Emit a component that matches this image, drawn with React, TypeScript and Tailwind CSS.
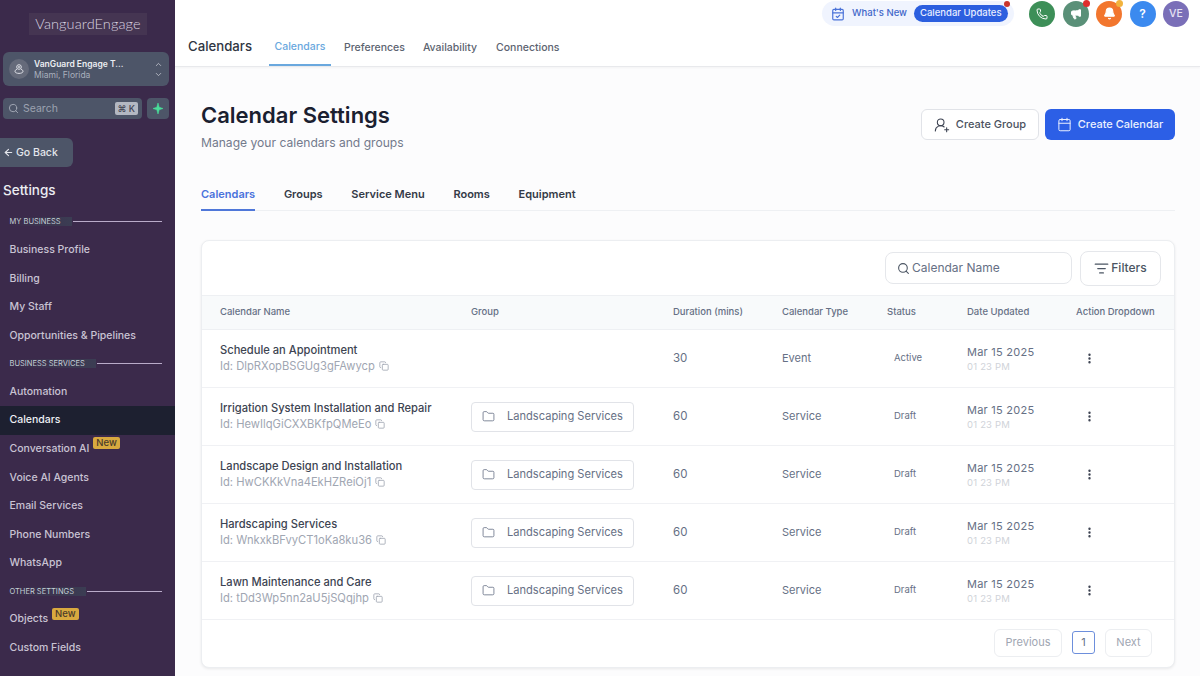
import { ArrowLeft, Calendar, CalendarCheck, ChevronDown, ChevronUp, Copy, Folder, ListFilter, Megaphone, MoreVertical, Phone, Bell, Search, UserRoundPlus } from "lucide-react";

const font = { fontFamily: "Inter, 'Noto Sans', sans-serif" };

function Section({ label, tintW }: { label: string; tintW: string }) {
  return (
    <div className="flex h-[27.5px] items-center pl-[9.5px] pr-[13px]">
      <span className={`${tintW} flex h-[9px] shrink-0 items-center whitespace-nowrap bg-linear-to-r from-[#3b2a4b] to-[#3b3d53] text-[7.5px] uppercase leading-none text-[#c4d0d6]`}>{label}</span>
      <span className="h-px flex-1 bg-[#b9abc9]" />
    </div>
  );
}

function NavItem({ label, active, isNew, mt }: { label: string; active?: boolean; isNew?: boolean; mt?: string }) {
  return (
    <div className={`relative flex h-[28.6px] shrink-0 items-center pl-[9.5px] text-[10.5px] font-medium ${active ? "bg-[#1d2030] text-[#eef0f5]" : "text-[#c9c3d3]"}`}>
      <span className="whitespace-nowrap">{label}</span>
      {isNew && <span className={`ml-1 ${mt} rounded-[2px] bg-[#d8a93f] px-[3px] text-[9.5px] leading-[12px] text-[#4a3a2a]`}>New</span>}
    </div>
  );
}

function Sidebar() {
  return (
    <aside className="flex w-[175px] shrink-0 flex-col overflow-hidden bg-[#3b2a4b]">
      <div className="mt-[13px] flex h-[22px] items-center self-end mr-[28px] w-[118px] justify-center bg-[#453552] text-[14.5px] font-light tracking-[0.1px] text-[#d9d3e0]" style={{ fontFamily: "Lato, sans-serif" }}>VanguardEngage</div>
      <div className="ml-[3px] mt-[17px] flex h-[34px] w-[166px] items-center rounded-md bg-[#4d5568] pl-[6px] pr-[6px]">
        <span className="flex h-5 w-5 shrink-0 items-center justify-center rounded-full bg-[#656a7a]">
          <svg width="12" height="12" viewBox="0 0 12 12" fill="none" stroke="#dfe1e8" strokeWidth="1"><circle cx="6" cy="4" r="2.3" /><circle cx="6" cy="4" r="0.6" /><path d="M4 6.2 C2.5 6.8 2 7.6 2 8.4 C2 9.6 3.8 10.4 6 10.4 C8.2 10.4 10 9.6 10 8.4 C10 7.6 9.5 6.8 8 6.2" /></svg>
        </span>
        <div className="ml-[5px] flex-1 leading-none">
          <div className="text-[8.5px] font-semibold leading-[12px] text-[#eceef2] whitespace-nowrap">VanGuard Engage T...</div>
          <div className="text-[8.5px] leading-[11px] text-[#aab0bd]">Miami, Florida</div>
        </div>
        <div className="flex flex-col gap-[1px] text-[#c9ccd5]"><ChevronUp size={9} /><ChevronDown size={9} /></div>
      </div>
      <div className="ml-[3px] mt-[12px] flex h-[21px] items-center gap-[5px]">
        <div className="flex h-[21px] w-[139px] items-center rounded-[4px] bg-[#4d5568] pl-[5px] pr-[4px]">
          <Search size={11} className="text-[#a5abb8]" />
          <span className="ml-[4px] flex-1 text-[10.5px] text-[#9ca2b0]">Search</span>
          <span className="rounded-[2px] bg-[#b3b8c2] px-[3px] text-[9px] font-medium leading-[13px] text-[#3f4352]">⌘ K</span>
        </div>
        <div className="flex h-[21px] w-[22px] items-center justify-center rounded-[4px] bg-[#4d5568]">
          <svg width="10" height="11" viewBox="0 0 10 11"><path d="M5 0 L6.2 4.3 L10 5.5 L6.2 6.7 L5 11 L3.8 6.7 L0 5.5 L3.8 4.3 Z" fill="#4ade9a" stroke="#4ade9a" strokeWidth="0.6" /></svg>
        </div>
      </div>
      <div className="mt-[19px] flex h-[29px] w-[73px] items-center rounded-r-md bg-[#4d5568] pl-[3px] text-[10.5px] font-medium text-[#e4e6ec]">
        <ArrowLeft size={11} strokeWidth={2.4} /><span className="ml-[2px]">Go Back</span>
      </div>
      <div className="mt-[14px] h-[19px] pl-[3px] text-[13.5px] font-medium leading-[19px] text-[#eceef2]">Settings</div>
      <div className="mt-[8px] flex flex-col">
        <Section label="My Business" tintW="w-[62px] mr-[1px]" />
        <NavItem label="Business Profile" />
        <NavItem label="Billing" />
        <NavItem label="My Staff" />
        <NavItem label="Opportunities & Pipelines" />
        <Section label="Business Services" tintW="w-[86px] mr-[1px]" />
        <NavItem label="Automation" />
        <NavItem label="Calendars" active />
        <NavItem label="Conversation AI" isNew mt="-mt-[11px]" />
        <NavItem label="Voice AI Agents" />
        <NavItem label="Email Services" />
        <NavItem label="Phone Numbers" />
        <NavItem label="WhatsApp" />
        <Section label="Other Settings" tintW="w-[76px] mr-[1px]" />
        <NavItem label="Objects" isNew mt="-mt-[11px]" />
        <NavItem label="Custom Fields" />
      </div>
    </aside>
  );
}

function Round({ bg, children, dot }: { bg: string; children: React.ReactNode; dot?: string }) {
  return (
    <div className={`relative flex h-[26px] w-[26px] items-center justify-center rounded-full text-white ${bg}`}>
      {children}
      {dot && <span className={`absolute -right-[1px] -top-[1px] h-[7px] w-[7px] rounded-full ${dot}`} />}
    </div>
  );
}

function TopBar() {
  return (
    <header className="relative h-[67px] shrink-0 border-b border-[#e8e9ec] bg-white shadow-[0_1px_2px_rgba(0,0,0,0.04)]">
      <div className="absolute right-[11px] top-0 flex h-[27px] items-center">
        <div className="relative mr-[15px] flex h-[25px] w-[192px] items-center whitespace-nowrap rounded-full bg-[#f0f4fe] pl-[9px]">
          <CalendarCheck size={14} className="text-[#4a72d8]" />
          <span className="ml-[7px] text-[9.5px] font-medium text-[#3f66c9]">What's New</span>
          <span className="relative ml-[7px] flex h-[17px] items-center rounded-full bg-[#2c5fdf] px-[6px] text-[9.5px] font-medium text-[#e8eeff]">
            Calendar Updates
            <span className="absolute -right-[2px] -top-[4px] h-[6px] w-[6px] rounded-full bg-[#c8352c]" />
          </span>
        </div>
        <div className="flex gap-[7.5px]">
          <Round bg="bg-[#3d8f58]"><Phone size={12} /></Round>
          <Round bg="bg-[#5a9078]" dot="bg-[#e02d2d]"><Megaphone size={12} fill="white" /></Round>
          <Round bg="bg-[#f2762e]" dot="bg-[#f2b33d]"><Bell size={13} fill="white" /></Round>
          <Round bg="bg-[#3b8aef]"><span className="text-[12px] font-semibold">?</span></Round>
          <Round bg="bg-[#7a6fb8]"><span className="text-[10.5px] font-medium text-[#e6e3f3]">VE</span></Round>
        </div>
      </div>
      <div className="flex h-full items-end pl-[13px]">
        <div className="mb-[10px] text-[13.2px] font-medium leading-[20px] text-[#2f3542]">Calendars</div>
        <nav className="ml-[17px] flex text-[10.5px] font-medium text-[#5c6370]">
          <div className="flex h-[30px] w-[62px] items-start justify-center border-b-2 border-[#6aa8de] pt-[3px] text-[#6aa8de]">Calendars</div>
          <div className="ml-[13px] pt-[4px]">Preferences</div>
          <div className="ml-[18px] pt-[4px]">Availability</div>
          <div className="ml-[19px] pt-[4px]">Connections</div>
        </nav>
      </div>
    </header>
  );
}

const rows = [
  { name: "Schedule an Appointment", id: "DlpRXopBSGUg3gFAwycp", group: false, dur: "30", type: "Event", status: "Active" },
  { name: "Irrigation System Installation and Repair", id: "HewIlqGiCXXBKfpQMeEo", group: true, dur: "60", type: "Service", status: "Draft" },
  { name: "Landscape Design and Installation", id: "HwCKKkVna4EkHZReiOj1", group: true, dur: "60", type: "Service", status: "Draft" },
  { name: "Hardscaping Services", id: "WnkxkBFvyCT1oKa8ku36", group: true, dur: "60", type: "Service", status: "Draft" },
  { name: "Lawn Maintenance and Care", id: "tDd3Wp5nn2aU5jSQqjhp", group: true, dur: "60", type: "Service", status: "Draft" },
];

const cols = "grid grid-cols-[269px_202px_109px_105px_80px_109px_1fr] items-center";

function Table() {
  return (
    <div className="mt-[29px] flex h-[428px] flex-col rounded-lg border border-[#eceef1] bg-white shadow-[0_1px_3px_rgba(0,0,0,0.08)]">
      <div className="flex h-[54px] shrink-0 items-center justify-end gap-[8px] pr-[13px]">
        <div className="flex h-[32px] w-[187px] items-center rounded-lg border border-[#e5e7eb] pl-[11px] text-[12px] text-[#667085]">
          <Search size={13} className="mr-[2px] text-[#4b5563]" />Calendar Name
        </div>
        <div className="flex h-[35px] w-[81px] items-center justify-center rounded-lg border border-[#e5e7eb] text-[12px] font-medium text-[#4b5563]">
          <ListFilter size={15} className="mr-[2px]" />Filters
        </div>
      </div>
      <div className={`${cols} h-[35px] shrink-0 border-y border-[#eef0f3] bg-[#f8fafb] text-[9.5px] font-medium text-[#667085]`}>
        <div className="pl-[18px]">Calendar Name</div><div>Group</div><div>Duration (mins)</div><div>Calendar Type</div><div>Status</div><div>Date Updated</div><div className="whitespace-nowrap">Action Dropdown</div>
      </div>
      {rows.map((r) => (
        <div key={r.id} className={`${cols} h-[58px] shrink-0 border-b border-[#f0f1f4]`}>
          <div className="pl-[18px]">
            <div className="text-[11.15px] font-medium leading-[15px] text-[#3d4452] whitespace-nowrap">{r.name}</div>
            <div className="flex items-center text-[11.2px] leading-[16px] text-[#a0a6b2] whitespace-nowrap">Id: {r.id}<Copy size={10} className="ml-[4px]" /></div>
          </div>
          <div>
            {r.group && (
              <div className="flex h-[30px] w-[163px] items-center rounded border border-[#e1e3e8] pl-[10px] text-[11.1px] text-[#667085]">
                <Folder size={13} strokeWidth={1.5} className="mr-[12px]" />Landscaping Services
              </div>
            )}
          </div>
          <div className="text-[11.5px] text-[#667085]">{r.dur}</div>
          <div className="text-[11px] text-[#667085]">{r.type}</div>
          <div className="pl-[7px] text-[9.5px] text-[#667085]">{r.status}</div>
          <div>
            <div className="text-[11px] leading-[15px] tracking-[0.25px] text-[#667085]">Mar 15 2025</div>
            <div className="text-[9.5px] leading-[13px] tracking-[0.2px] text-[#d0d3d9]">01 23 PM</div>
          </div>
          <div className="pl-[6.5px] text-[#3b4150]"><MoreVertical size={13} strokeWidth={2.4} /></div>
        </div>
      ))}
      <div className="flex flex-1 items-center justify-end pb-[2px] pr-[22px] text-[11px] text-[#a0a6b2]">
        <div className="flex h-[28px] w-[68px] items-center justify-center rounded-md border border-[#eceef1]">Previous</div>
        <div className="ml-[10px] flex h-[23px] w-[23px] items-center justify-center rounded-[3px] border border-[#6d8fdc] text-[#667085]">1</div>
        <div className="ml-[10px] flex h-[28px] w-[47px] items-center justify-center rounded-md border border-[#eceef1]">Next</div>
      </div>
    </div>
  );
}

function Main() {
  return (
    <main className="flex min-w-0 flex-1 flex-col bg-[#fcfcfd]">
      <TopBar />
      <div className="pl-[26px] pr-[25px]">
        <div className="flex items-start justify-between pt-[33px]">
          <div>
            <h1 className="text-[22px] font-semibold leading-[30px] text-[#1a2030]">Calendar Settings</h1>
            <p className="mt-[4px] text-[12.1px] leading-[18px] text-[#737a8c]">Manage your calendars and groups</p>
          </div>
          <div className="mt-[9px] flex gap-[6px]">
            <div className="flex h-[31px] w-[118px] items-center justify-center rounded-md border border-[#e1e3e8] bg-white text-[11px] font-medium text-[#4b5260]">
              <UserRoundPlus size={16} strokeWidth={1.6} className="mr-[6px] text-[#3b4150]" />Create Group
            </div>
            <div className="flex h-[31px] w-[130px] items-center justify-center rounded-md bg-[#2c5fe6] text-[11px] font-medium text-[#eaf0ff]">
              <Calendar size={15} strokeWidth={1.6} className="mr-[6px]" />Create Calendar
            </div>
          </div>
        </div>
        <div className="mt-[23px] flex h-[36px] items-start gap-[28.75px] border-b border-[#eef0f3] text-[11px] font-semibold text-[#343a47]">
          <div className="h-[36px] border-b-2 border-[#4f77d9] pt-[11px] text-[#4a72dc]">Calendars</div>
          <div className="pt-[11px]">Groups</div>
          <div className="pt-[11px]">Service Menu</div>
          <div className="pt-[11px]">Rooms</div>
          <div className="pt-[11px]">Equipment</div>
        </div>
        <Table />
      </div>
    </main>
  );
}

export default function App() {
  return (
    <div className="flex h-[676px] w-[1200px] overflow-hidden" style={font}>
      <Sidebar />
      <Main />
    </div>
  );
}
